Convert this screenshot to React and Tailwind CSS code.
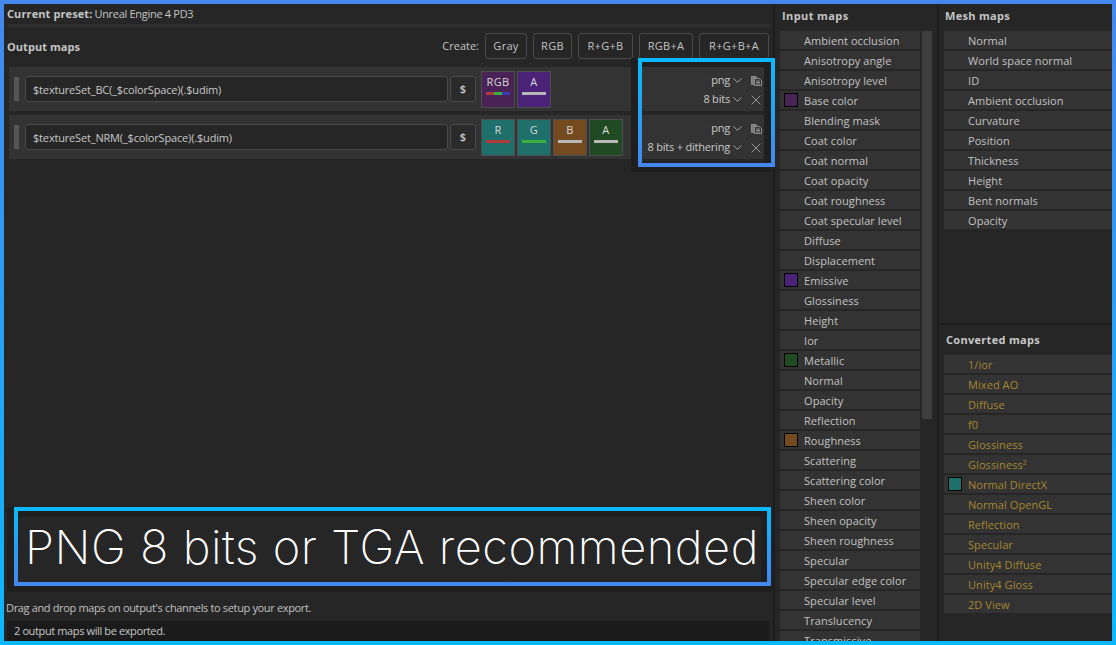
import React from 'react';
import { ChevronDown, X } from 'lucide-react';

const inputMaps = [
  ['Ambient occlusion'], ['Anisotropy angle'], ['Anisotropy level'], ['Base color', '#4a2356'],
  ['Blending mask'], ['Coat color'], ['Coat normal'], ['Coat opacity'], ['Coat roughness'],
  ['Coat specular level'], ['Diffuse'], ['Displacement'], ['Emissive', '#4a2378'], ['Glossiness'],
  ['Height'], ['Ior'], ['Metallic', '#1f4a22'], ['Normal'], ['Opacity'], ['Reflection'],
  ['Roughness', '#744a20'], ['Scattering'], ['Scattering color'], ['Sheen color'], ['Sheen opacity'],
  ['Sheen roughness'], ['Specular'], ['Specular edge color'], ['Specular level'], ['Translucency'],
  ['Transmissive'],
];

const meshMaps = ['Normal', 'World space normal', 'ID', 'Ambient occlusion', 'Curvature', 'Position', 'Thickness', 'Height', 'Bent normals', 'Opacity'];

const convertedMaps = [
  ['1/ior'], ['Mixed AO'], ['Diffuse'], ['f0'], ['Glossiness'], ['Glossiness²'], ['Normal DirectX', '#1f6f6b'],
  ['Normal OpenGL'], ['Reflection'], ['Specular'], ['Unity4 Diffuse'], ['Unity4 Gloss'], ['2D View'],
];

const outputs = [
  {
    name: '$textureSet_BC(_$colorSpace)(.$udim)',
    depth: '8 bits',
    channels: [
      { label: 'RGB', bg: 'bg-[#4a2356]', bar: 'rgb' },
      { label: 'A', bg: 'bg-[#4a2378]', bar: 'bg-[#b8b8b8]' },
    ],
  },
  {
    name: '$textureSet_NRM(_$colorSpace)(.$udim)',
    depth: '8 bits + dithering',
    channels: [
      { label: 'R', bg: 'bg-[#1f6f6b]', bar: 'bg-[#b03a3a]' },
      { label: 'G', bg: 'bg-[#1f6f6b]', bar: 'bg-[#3cb03c]' },
      { label: 'B', bg: 'bg-[#744a20]', bar: 'bg-[#b8b8b8]' },
      { label: 'A', bg: 'bg-[#1f4a22]', bar: 'bg-[#b8b8b8]' },
    ],
  },
];

function CopyIcon() {
  return (
    <svg width="11" height="10" viewBox="0 0 11 10" fill="#7d7d7d" stroke="#8c8c8c" strokeWidth="1">
      <path d="M0.5 8.5V0.5H5L6 2H3.5V8.5Z" />
      <path d="M3.5 9.5V2.5H8L10.5 4.5V9.5Z" fill="#333333" />
      <path d="M5 5H9M5 6.5H9M5 8H9" fill="none" />
    </svg>
  );
}

function MapRow({ label, color, gold }) {
  return (
    <div className={`flex items-center h-[18px] shrink-0 bg-[#333333] tracking-[0.07px] ${gold ? 'text-[#a5862f]' : 'text-[#c2c2c2]'}`}>
      <span className="w-[24px] pl-[4px] shrink-0">
        {color && <span className="block w-[14px] h-[14px] border border-black" style={{ backgroundColor: color }} />}
      </span>
      <span className="pt-[2px]">{label}</span>
    </div>
  );
}

function Channel({ label, bg, bar }) {
  return (
    <div className={`w-[34px] h-[37px] border border-[#4d4d4d] ${bg} flex flex-col items-center pt-[2px]`}>
      <span className="leading-[15px] text-[#d8d8d8]">{label}</span>
      {bar === 'rgb' ? (
        <div className="flex w-[24px] h-[3px] mt-[3px]">
          <span className="flex-1 bg-[#b03a3a]" />
          <span className="flex-1 bg-[#3cb03c]" />
          <span className="flex-1 bg-[#3a3ab0]" />
        </div>
      ) : (
        <div className={`w-[24px] h-[3px] mt-[3px] ${bar}`} />
      )}
    </div>
  );
}

function OutputRow({ output }) {
  return (
    <div className="flex items-center h-[44px] bg-[#333333] pl-[5px] pr-[10px]">
      <div className="w-[5px] h-[24px] bg-[#555555] mr-[6px]" />
      <div className="w-[423px] h-[26px] flex items-center pl-[7px] pt-[2px] bg-[#262626] border border-[#4a4a4a] rounded-[3px] text-[#c8c8c8] tracking-[-0.17px]">
        {output.name}
      </div>
      <div className="w-[26px] h-[26px] ml-[2px] flex items-center justify-center bg-[#2b2b2b] border border-[#4a4a4a] rounded-[3px] text-[#c8c8c8] font-semibold">$</div>
      <div className="flex gap-[2px] ml-[5px]">
        {output.channels.map((c, i) => <Channel key={i} {...c} />)}
      </div>
      <div className="ml-auto flex flex-col gap-[3px] pt-[2px] text-[#c8c8c8] tracking-[-0.2px]">
        <div className="flex items-center justify-end h-[16px]">
          <span>png</span>
          <ChevronDown size={15} strokeWidth={1.25} className="mr-[3px]" />
          <span className="w-[16px] flex justify-center"><CopyIcon /></span>
        </div>
        <div className="flex items-center justify-end h-[16px]">
          <span>{output.depth}</span>
          <ChevronDown size={15} strokeWidth={1.25} className="mr-[3px]" />
          <span className="w-[16px] flex justify-center"><X size={16} strokeWidth={1} /></span>
        </div>
      </div>
    </div>
  );
}

export default function App() {
  return (
    <div
      className="relative w-[1116px] h-[645px] overflow-hidden flex border-4 bg-[#262626] text-[11px] tracking-[0.3px]"
      style={{ fontFamily: '"Open Sans", sans-serif', borderImage: 'linear-gradient(to bottom, #4488ee, #0cb8ff) 1' }}
    >
      {/* main panel */}
      <div className="w-[769px] h-full flex flex-col shrink-0">
        <div className="h-[20px] flex items-center pl-[3px] gap-[2px] text-[#c4c4c4]">
          <span className="font-bold tracking-[0.1px]">Current preset:</span>
          <span className="tracking-[-0.3px]">Unreal Engine 4 PD3</span>
        </div>
        <div className="h-[3px] bg-[#2e2e2e] mx-[3px]" />
        <div className="flex items-center h-[26px] mt-[6px] pl-[3px] pr-[4px] text-[#c4c4c4]">
          <span className="font-bold tracking-[0.05px] pt-[2px]">Output maps</span>
          <span className="ml-auto mr-[6px] pt-[1px] tracking-[0px]">Create:</span>
          <div className="flex gap-[6px]">
            {[['Gray', 'w-[42px]'], ['RGB', 'w-[39px]'], ['R+G+B', 'w-[55px]'], ['RGB+A', 'w-[54px]'], ['R+G+B+A', 'w-[70px]']].map(([t, w]) => (
              <div key={t} className={`${w} h-[26px] flex items-center justify-center pt-[1px] border border-[#4a4a4a] rounded-[3px]`}>{t}</div>
            ))}
          </div>
        </div>
        <div className="flex flex-col gap-[4px] mt-[8px] ml-[5px] mr-[-1px]">
          {outputs.map((o, i) => <OutputRow key={i} output={o} />)}
        </div>

        <div className="mt-auto ml-[3px] mr-[1px] h-[85px] bg-[#1f1f1f] rounded-[3px] pl-[7px] pr-[1px]">
          <div className="h-[79px] border-4 flex items-center" style={{ borderImage: 'linear-gradient(to bottom, #0cb8ff, #4488ee) 1' }}>
            <div className="w-full h-[65px] mt-[6px] mr-[6px] pl-[5px] pb-[5px] bg-[#262626] flex items-center justify-center whitespace-nowrap text-[47px] font-extralight text-white tracking-[0.5px]" style={{ fontFamily: 'Inter, sans-serif' }}>
              PNG 8 bits or TGA recommended
            </div>
          </div>
        </div>
        <div className="h-[29px] flex items-center pl-[2px] pt-[4px] text-[#c0c0c0] tracking-[-0.35px]">Drag and drop maps on output's channels to setup your export.</div>
        <div className="h-[20px] flex items-center pl-[7px] ml-[3px] mr-[4px] bg-[#1b1b1b] text-[#c8c8c8] tracking-[-0.38px]">2 output maps will be exported.</div>
      </div>

      {/* input maps */}
      <div className="w-[166px] h-full shrink-0 border-x-2 border-[#1c1c1c] flex flex-col">
        <div className="h-[27px] flex items-center pl-[7px] pb-[2px] font-bold text-[#c4c4c4] tracking-[0.4px]">Input maps</div>
        <div className="flex flex-1 min-h-0 pl-[5px] overflow-hidden">
          <div className="w-[140px] flex flex-col gap-[2px]">
            {inputMaps.map(([l, c]) => <MapRow key={l} label={l} color={c} />)}
          </div>
          <div className="w-[10px] h-[388px] ml-[2px] bg-[#3e3e3e]" />
        </div>
      </div>

      {/* mesh + converted maps */}
      <div className="flex-1 h-full flex flex-col min-w-0">
        <div className="h-[321px] flex flex-col pl-[5px] border-b-2 border-[#1c1c1c]">
          <div className="h-[27px] flex items-center pl-[1px] pb-[2px] font-bold text-[#c4c4c4]">Mesh maps</div>
          <div className="flex flex-col gap-[2px]">
            {meshMaps.map(l => <MapRow key={l} label={l} />)}
          </div>
        </div>
        <div className="flex flex-col pl-[5px]">
          <div className="h-[30px] flex items-center pl-[2px] font-bold text-[#c8c8c8]">Converted maps</div>
          <div className="flex flex-col gap-[2px]">
            {convertedMaps.map(([l, c]) => <MapRow key={l} label={l} color={c} gold />)}
          </div>
        </div>
      </div>

      {/* highlight around the file format controls */}
      <div className="absolute left-[627px] top-[54px] w-[140px] h-[114px] border-l-[11px] border-r-[7px] border-t-[9px] border-b-[10px] border-[#1f1f1f] pointer-events-none" />
      <div className="absolute left-[634px] top-[54px] w-[137px] h-[109px] border-4 pointer-events-none" style={{ borderImage: 'linear-gradient(to bottom, #0cb8ff, #4488ee) 1' }} />
    </div>
  );
}
